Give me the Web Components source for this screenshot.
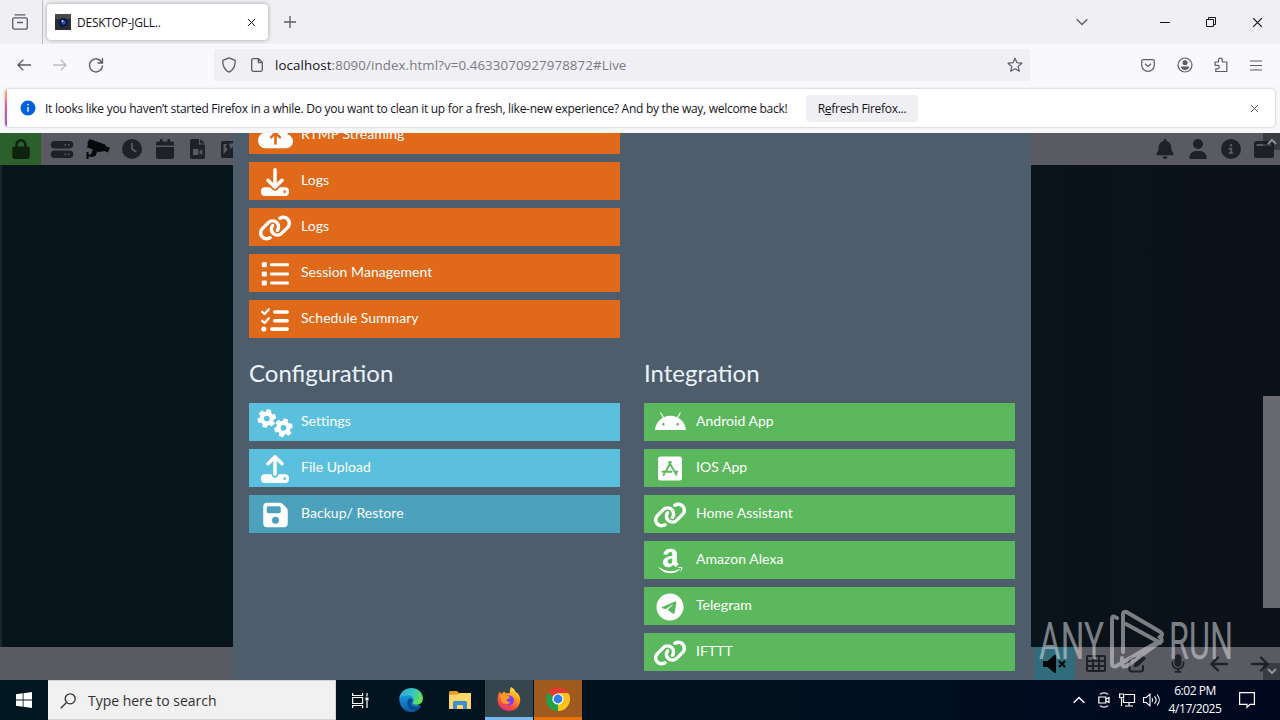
<!DOCTYPE html>
<html lang="en">
<head>
<meta charset="utf-8">
<title>DESKTOP-JGLL..</title>
<style>
  html, body { margin: 0; height: 100%; overflow: hidden; }
  body { font-family: "Open Sans", "Noto Sans", sans-serif; }
</style>
</head>
<body>
<desktop-screen></desktop-screen>

<script>
const gear = (cx, cy, r) => {
  const teeth = [0, 60, 120, 180, 240, 300].map((a) =>
    `<rect x="${cx - r * 0.27}" y="${cy - r}" width="${r * 0.54}" height="${r * 0.5}" rx="${r * 0.1}" transform="rotate(${a + 15} ${cx} ${cy})"/>`).join("");
  return `${teeth}<circle cx="${cx}" cy="${cy}" r="${r * 0.54}" fill="none" stroke="currentColor" stroke-width="${r * 0.46}"/>`;
};

// name: [viewBox, markup]
const ICONS = {
  link: ["0 0 640 512", `<path d="M579.8 267.7c56.5-56.5 56.5-148 0-204.5c-50-50-128.8-56.5-186.3-15.4l-1.6 1.1c-14.4 10.3-17.7 30.3-7.4 44.6s30.3 17.7 44.6 7.4l1.6-1.1c32.1-22.9 76-19.3 103.8 8.6c31.5 31.5 31.5 82.5 0 114L422.3 334.8c-31.5 31.5-82.5 31.5-114 0c-27.9-27.9-31.5-71.8-8.6-103.8l1.1-1.6c10.3-14.4 6.9-34.4-7.4-44.6s-34.4-6.9-44.6 7.4l-1.1 1.6C206.5 251.2 213 330 263 380c56.5 56.5 148 56.5 204.5 0L579.8 267.7zM60.2 244.3c-56.5 56.5-56.5 148 0 204.5c50 50 128.8 56.5 186.3 15.4l1.6-1.1c14.4-10.3 17.7-30.3 7.4-44.6s-30.3-17.7-44.6-7.4l-1.6 1.1c-32.1 22.9-76 19.3-103.8-8.6C74 372 74 321 105.5 289.5L217.7 177.2c31.5-31.5 82.5-31.5 114 0c27.9 27.9 31.5 71.8 8.6 103.9l-1.1 1.6c-10.3 14.4-6.9 34.4 7.4 44.6s34.4 6.9 44.6-7.4l1.1-1.6C433.5 260.8 427 182 377 132c-56.5-56.5-148-56.5-204.5 0L60.2 244.3z"/>`],
  cloud: ["0 0 640 512", `<path d="M144 480C64.5 480 0 415.5 0 336c0-62.8 40.2-116.2 96.2-135.9c-.1-2.7-.2-5.4-.2-8.1c0-88.4 71.6-160 160-160c59.3 0 111 32.2 138.7 80.2C409.9 102 428.3 96 448 96c53 0 96 43 96 96c0 12.2-2.3 23.8-6.4 34.6C596 238.4 640 290.1 640 352c0 70.7-57.3 128-128 128H144zm79-217c-9.4 9.4-9.4 24.6 0 33.9s24.6 9.4 33.9 0l39-39V392c0 13.3 10.7 24 24 24s24-10.7 24-24V257.9l39 39c9.4 9.4 24.6 9.4 33.9 0s9.4-24.6 0-33.9l-80-80c-9.4-9.4-24.6-9.4-33.9 0l-80 80z"/>`],
  download: ["0 0 512 512", `<path d="M288 32c0-17.7-14.3-32-32-32s-32 14.3-32 32V274.7l-73.4-73.4c-12.5-12.5-32.8-12.5-45.3 0s-12.5 32.8 0 45.3l128 128c12.5 12.5 32.8 12.5 45.3 0l128-128c12.5-12.5 12.5-32.8 0-45.3s-32.8-12.5-45.3 0L288 274.7V32zM64 352c-35.3 0-64 28.7-64 64v32c0 35.3 28.7 64 64 64H448c35.3 0 64-28.7 64-64V416c0-35.3-28.7-64-64-64H346.5l-45.3 45.3c-25 25-65.5 25-90.5 0L165.5 352H64zm368 56a24 24 0 1 1 0 48 24 24 0 1 1 0-48z"/>`],
  upload: ["0 0 512 512", `<path d="M288 109.3V352c0 17.7-14.3 32-32 32s-32-14.3-32-32V109.3l-73.4 73.4c-12.5 12.5-32.8 12.5-45.3 0s-12.5-32.8 0-45.3l128-128c12.5-12.5 32.8-12.5 45.3 0l128 128c12.5 12.5 12.5 32.8 0 45.3s-32.8 12.5-45.3 0L288 109.3zM64 352H192c0 35.3 28.7 64 64 64s64-28.7 64-64H448c35.3 0 64 28.7 64 64v32c0 35.3-28.7 64-64 64H64c-35.3 0-64-28.7-64-64V416c0-35.3 28.7-64 64-64zM432 456a24 24 0 1 0 0-48 24 24 0 1 0 0 48z"/>`],
  list: ["0 0 28 24", `<rect x=".8" y=".3" width="5" height="5" rx=".8"/><rect x=".8" y="9.500" width="5" height="5" rx=".8"/><rect x=".8" y="18.500" width="5" height="5" rx=".8"/><rect x="9" y="1.300" width="19" height="3" rx="1"/><rect x="9" y="10.500" width="19" height="3" rx="1"/><rect x="9" y="19.500" width="19" height="3" rx="1"/>`],
  checklist: ["0 0 28 24", `<path d="M1.2 3.8l2.4 2.2L7.8 1.2M1.2 12.8l2.4 2.2 4.2-4.8" fill="none" stroke="currentColor" stroke-width="2.3" stroke-linecap="round" stroke-linejoin="round"/><circle cx="2.8" cy="21" r="2.6"/><rect x="12" y="2.2" width="16" height="3.6" rx="1.8"/><rect x="12" y="11" width="16" height="3.4" rx="1.7"/><rect x="9" y="19.3" width="19" height="3.6" rx="1.8"/>`],
  gears: ["0 0 36 28", gear(9.8, 9.5, 9.2) + gear(26.5, 18.8, 9.2)],
  floppy: ["0 0 448 512", `<path d="M64 32C28.7 32 0 60.7 0 96V416c0 35.3 28.7 64 64 64H384c35.3 0 64-28.7 64-64V173.3c0-17-6.7-33.3-18.7-45.3L352 50.7C340 38.7 323.7 32 306.7 32H64zm0 96c0-17.7 14.3-32 32-32H288c17.7 0 32 14.3 32 32v64c0 17.7-14.3 32-32 32H96c-17.7 0-32-14.3-32-32V128zM224 288a64 64 0 1 1 0 128 64 64 0 1 1 0-128z"/>`],
  android: ["0 0 576 512", `<path d="M420.55,301.93a24,24,0,1,1,24-24,24,24,0,0,1-24,24m-265.1,0a24,24,0,1,1,24-24,24,24,0,0,1-24,24m273.7-144.48,47.94-83a10,10,0,1,0-17.27-10h0l-48.54,84.07a301.25,301.25,0,0,0-246.56,0L116.18,64.45a10,10,0,1,0-17.27,10h0l47.94,83C64.53,202.22,8.24,285.55,0,384H576c-8.24-98.45-64.54-181.78-146.85-226.55"/>`],
  appstore: ["0 0 24 24", `<rect width="24" height="24" rx="2.500"/><path d="M11 5.500l5.800 10 1.700 2.800M13 5.500L7.500 15.200M4.500 15.200h9M16.500 15.200h3M6.300 17.300l-.7 1.200" stroke="var(--cut)" stroke-width="1.900" stroke-linecap="round" fill="none"/>`],
  amazon: ["0 0 448 512", `<path d="M257.2 162.7c-48.7 1.8-169.5 15.5-169.5 117.5 0 109.5 138.3 114 183.5 43.2 6.5 10.2 35.4 37.5 45.3 46.8l56.8-56S341 288.9 341 261.4V114.3C341 89 316.5 32 228.7 32 140.7 32 94 87 94 136.3l73.5 6.8c16.3-49.5 54.2-49.5 54.2-49.5 40.7-.1 35.5 29.8 35.5 69.1zm0 86.8c0 80-84.2 68-84.2 17.2 0-47.2 50.5-56.7 84.2-57.8v40.6zm136 163.5c-7.7 10-70 67-174.5 67S34.2 408.5 9.7 379c-6.8-7.7 1-11.3 5.5-8.3C88.5 415.2 203 488.5 387.7 401c7.5-3.7 13.3 2 5.5 12zm39.8 2.2c-6.5 15.8-16 26.8-21.2 31-5.5 4.5-9.5 2.7-6.5-3.8s19.3-46.5 12.7-55c-6.500-8.300-37-4.300-48-3.200-10.800 1-13 2-14-.3-2.300-5.700 21.700-15.500 37.500-17.500 15.700-1.800 41-.8 46 5.700 3.700 5.100 0 27.100-6.500 43.100z"/>`],
  telegram: ["0 0 496 512", `<path d="M248,8C111.033,8,0,119.033,0,256S111.033,504,248,504,496,392.967,496,256,384.967,8,248,8ZM362.952,176.66c-3.732,39.215-19.881,134.378-28.1,178.3-3.476,18.584-10.322,24.816-16.948,25.425-14.4,1.326-25.338-9.517-39.287-18.661-21.827-14.308-34.158-23.215-55.346-37.177-24.485-16.135-8.612-25,5.342-39.5,3.652-3.793,67.107-61.51,68.335-66.746.153-.655.3-3.1-1.154-4.384s-3.59-.849-5.135-.5q-3.283.746-104.608,69.142-14.845,10.194-26.894,9.934c-8.855-.191-25.888-5.006-38.551-9.123-15.531-5.048-27.875-7.717-26.8-16.291q.84-6.7,18.45-13.7,108.446-47.248,144.628-62.3c68.872-28.647,83.183-33.623,92.511-33.789,2.052-.034,6.639.474,9.61,2.885a10.452,10.452,0,0,1,3.53,6.716A43.765,43.765,0,0,1,362.952,176.66Z"/>`],
  lock: ["0 0 448 512", `<path d="M144 144v48H304V144c0-44.2-35.8-80-80-80s-80 35.8-80 80zM80 192V144C80 64.5 144.5 0 224 0s144 64.5 144 144v48h16c35.3 0 64 28.7 64 64V448c0 35.3-28.7 64-64 64H64c-35.3 0-64-28.7-64-64V256c0-35.3 28.7-64 64-64H80z"/>`],
  server: ["0 0 20 17", `<path fill-rule="evenodd" d="M2.500 0h15a2.500 2.500 0 0 1 0 7.500h-15a2.500 2.500 0 0 1 0-7.500zM12.500 3v1.500h1.500V3zM16 3v1.500h1.500V3zM2.500 9.500h15a2.500 2.500 0 0 1 0 7.500h-15a2.500 2.500 0 0 1 0-7.500zM12.500 12.500v1.500h1.500v-1.500zM16 12.500v1.500h1.500v-1.500z"/>`],
  camera: ["0 0 24 20", `<path d="M3.500 0L19 5.500l1.500 2.500-2 4-5.500 1L.3 8l1.500-1L1.500 3.500zM20.500 7.500l3.500 1-2 5-3.500-1.500zM.5 13h2v2.500h2.500l2-5.500 4.500 2-2 4.800-3.500 1.200-3.500-.5V20h-2z"/>`],
  clock: ["0 0 512 512", `<path d="M256 0a256 256 0 1 1 0 512A256 256 0 1 1 256 0zM232 120V256c0 8 4 15.5 10.7 20l96 64c11 7.4 25.9 4.4 33.3-6.7s4.4-25.9-6.7-33.3L280 243.2V120c0-13.3-10.7-24-24-24s-24 10.7-24 24z"/>`],
  calendar: ["0 0 18 20", `<path d="M4 0h2.500v2.500h5V0H14v2.500h2A2 2 0 0 1 18 4.500V6.500H0v-2a2 2 0 0 1 2-2h2zM0 8h18v10a2 2 0 0 1-2 2H2a2 2 0 0 1-2-2z"/>`],
  video: ["0 0 15 20", `<path fill-rule="evenodd" d="M2 0h7v5.500h6V18a2 2 0 0 1-2 2H2a2 2 0 0 1-2-2V2a2 2 0 0 1 2-2zM10.200 0L15 4.500h-4.800zM3 10v6h5.500v-6zM9.500 12.300v1.800l2.800 2v-6z"/>`],
  image: ["0 0 17 17" , `<path fill-rule="evenodd" d="M2 0h13a2 2 0 0 1 2 2v13a2 2 0 0 1-2 2H2a2 2 0 0 1-2-2V2a2 2 0 0 1 2-2zM2.500 3v10l4.500-4.500-2.500-2.500L6 3zM8 2.500h7L9.500 8z"/>`],
  bell: ["0 0 448 512", `<path d="M224 0c-17.7 0-32 14.3-32 32V51.2C119 66 64 130.6 64 208v18.8c0 47-17.3 92.4-48.5 127.6l-7.4 8.3c-8.4 9.4-10.4 22.9-5.3 34.4S19.4 416 32 416H416c12.6 0 24-7.4 29.2-18.9s3.1-25-5.3-34.4l-7.4-8.3C401.3 319.2 384 273.9 384 226.8V208c0-77.4-55-142-128-156.8V32c0-17.7-14.3-32-32-32zm45.3 493.3c12-12 18.7-28.3 18.7-45.3H160c0 17 6.7 33.3 18.7 45.3s28.3 18.7 45.3 18.7s33.3-6.7 45.3-18.7z"/>`],
  user: ["0 0 448 512", `<path d="M224 256A128 128 0 1 0 224 0a128 128 0 1 0 0 256zm-45.7 48C79.8 304 0 383.8 0 482.3C0 498.7 13.3 512 29.7 512H418.3c16.4 0 29.700-13.3 29.700-29.700C448 383.800 368.200 304 269.700 304H178.300z"/>`],
  info: ["0 0 512 512", `<path d="M256 512A256 256 0 1 0 256 0a256 256 0 1 0 0 512zM216 336h24V272H216c-13.3 0-24-10.7-24-24s10.7-24 24-24h48c13.3 0 24 10.7 24 24v88h8c13.3 0 24 10.7 24 24s-10.7 24-24 24H216c-13.3 0-24-10.7-24-24s10.7-24 24-24zm40-208a32 32 0 1 1 0 64 32 32 0 1 1 0-64z"/>`],
  window: ["0 0 20 17", `<path fill-rule="evenodd" d="M2.500 0h15A2.500 2.500 0 0 1 20 2.500v12a2.500 2.500 0 0 1-2.500 2.500h-15A2.500 2.500 0 0 1 0 14.500v-12A2.500 2.500 0 0 1 2.500 0zM2.500 3v2h15V3z"/>`],
  mute: ["0 0 23 18", `<path d="M0 6h4.500L11.500 0h1.500v18h-1.500L4.500 12H0z"/><path d="M16 6l6 6M22 6l-6 6" stroke="currentColor" stroke-width="2"/>`],
  table: ["0 0 20 17", `<path fill-rule="evenodd" d="M2 0h16a2 2 0 0 1 2 2v13a2 2 0 0 1-2 2H2a2 2 0 0 1-2-2V2a2 2 0 0 1 2-2zM2 2v3h4V2zM8 2v3h4V2zM14 2v3h4V2zM2 7v3h4V7zM8 7v3h4V7zM14 7v3h4V7zM2 12v3h4v-3zM8 12v3h4v-3zM14 12v3h4v-3z"/>`],
  edit: ["0 0 18 18", `<path d="M7 3H4a2.500 2.500 0 0 0-2.500 2.500v8.500A2.500 2.500 0 0 0 4 16.500h8.500A2.500 2.500 0 0 0 15 14v-3" fill="none" stroke="currentColor" stroke-width="2.200" stroke-linecap="round"/><path d="M14.500 0L18 3.500 10 11.500l-4.500 1 1-4.500z"/>`],
  mic: ["0 0 384 512", `<path d="M192 0C139 0 96 43 96 96V256c0 53 43 96 96 96s96-43 96-96V96c0-53-43-96-96-96zM64 216c0-13.3-10.7-24-24-24s-24 10.7-24 24v40c0 89.1 66.2 162.7 152 174.4V464H120c-13.3 0-24 10.7-24 24s10.7 24 24 24H264c13.3 0 24-10.7 24-24s-10.7-24-24-24H216V430.4c85.8-11.7 152-85.3 152-174.4V216c0-13.3-10.7-24-24-24s-24 10.7-24 24v40c0 70.7-57.3 128-128 128s-128-57.3-128-128V216z"/>`],
  arrowLeft: ["0 0 18 16", `<path d="M17 8H2M8 1.500L1.500 8 8 14.500" fill="none" stroke="currentColor" stroke-width="2.300" stroke-linecap="round"/>`],
  arrowRight: ["0 0 18 16", `<path d="M1 8h15M10 1.500L16.500 8 10 14.500" fill="none" stroke="currentColor" stroke-width="2.300" stroke-linecap="round"/>`],

  // browser toolbar
  firefoxView: ["0 0 16 16", `<g fill="none" stroke="currentColor" stroke-width="1.300" stroke-linecap="round"><path d="M3 .8h10"/><path d="M2.500 3.800h11a1.800 1.800 0 0 1 1.800 1.800v7.600a2 2 0 0 1-2 2H2.700a2 2 0 0 1-2-2V5.600a1.800 1.800 0 0 1 1.800-1.800zM5.500 8.500h5"/></g>`],
  close: ["0 0 10 10", `<path d="M1 1l8 8M9 1L1 9" fill="none" stroke="currentColor" stroke-width="1.100"/>`],
  plus: ["0 0 12 12", `<path d="M6 0v12M0 6h12" fill="none" stroke="currentColor" stroke-width="1.300"/>`],
  chevron: ["0 0 12 8", `<path d="M.7 1.200L6 6.500l5.300-5.300" fill="none" stroke="currentColor" stroke-width="1.300"/>`],
  chevronUp: ["0 0 12 8", `<path d="M.7 6.800L6 1.500l5.300 5.300" fill="none" stroke="currentColor" stroke-width="1.500"/>`],
  scrollUp: ["0 0 10 7", `<path d="M1 6l4-4 4 4" fill="none" stroke="currentColor" stroke-width="2"/>`],
  scrollDown: ["0 0 10 7", `<path d="M1 1l4 4 4-4" fill="none" stroke="currentColor" stroke-width="2"/>`],
  minimize: ["0 0 10 10", `<path d="M0 5.500h10" stroke="currentColor"/>`],
  restore: ["0 0 10 10", `<path d="M.5 2.500h7v7h-7zM2.500 2.500v-2h7v7h-2" fill="none" stroke="currentColor"/>`],
  back: ["0 0 14 12", `<path d="M14 6H1M6.300.7L1 6l5.300 5.300" fill="none" stroke="currentColor" stroke-width="1.300"/>`],
  forward: ["0 0 14 12", `<path d="M0 6h13M7.700.7L13 6l-5.300 5.300" fill="none" stroke="currentColor" stroke-width="1.300"/>`],
  reload: ["0 0 16 16", `<path d="M13.800 5.500A6.500 6.500 0 1 0 14.500 8.500M14.500 1v5H9.500" fill="none" stroke="currentColor" stroke-width="1.300"/>`],
  shield: ["0 0 14 16", `<path d="M7 .8l6.200 2.500c.3 5.500-1.500 9.500-6.200 11.900C2.300 12.800.5 8.800.8 3.300z" fill="none" stroke="currentColor" stroke-width="1.300" stroke-linejoin="round"/>`],
  page: ["0 0 12 14" , `<path d="M2 .7h5.500l3.800 3.800v7.300a1.500 1.500 0 0 1-1.500 1.500H2.200A1.500 1.500 0 0 1 .7 11.800V2A1.300 1.300 0 0 1 2 .7zM7.300.9v3.800h3.800" fill="none" stroke="currentColor" stroke-width="1.300"/>`],
  star: ["0 0 16 16", `<path d="M8 1.200l2 4.500 4.900.5-3.700 3.200 1.100 4.900L8 11.800l-4.300 2.500 1.100-4.900L1.100 6.200 6 5.700z" fill="none" stroke="currentColor" stroke-width="1.200" stroke-linejoin="round"/>`],
  pocket: ["0 0 14 13", `<path d="M2 .7h10a1.300 1.300 0 0 1 1.300 1.300v4A6.300 6.300 0 0 1 .7 6V2A1.300 1.300 0 0 1 2 .7zM4 4.700l3 2.800 3-2.800" fill="none" stroke="currentColor" stroke-width="1.200"/>`],
  account: ["0 0 16 16", `<circle cx="8" cy="8" r="7" fill="none" stroke="currentColor" stroke-width="1.200"/><circle cx="8" cy="5.700" r="2.500"/><path d="M3.800 9.500h8.400c0 2.200-2 3.500-4.200 3.500s-4.200-1.300-4.200-3.500z"/>`],
  puzzle: ["0 0 14 16", `<path d="M1 8.400V5h3.500V3a1.900 1.900 0 0 1 3.800 0v2h4.500v9.500H1.800V11.800h1.800a1.700 1.700 0 0 0 0-3.400H1" fill="none" stroke="currentColor" stroke-width="1.200" stroke-linejoin="round"/>`],
  menu: ["0 0 12 11", `<path d="M0 1h12M0 5.500h12M0 10h12" stroke="currentColor" stroke-width="1.200"/>`],
  infoBlue: ["0 0 16 16", `<circle cx="8" cy="8" r="7.500" fill="#0060df"/><path d="M8 7v4.700M8 4v1.500" stroke="#fff" stroke-width="1.400"/>`],
  favicon: ["0 0 16 16", `<rect width="16" height="16" fill="#2b2c30"/><path d="M0 0h16v5H0z" fill="#47484b"/><circle cx="8.500" cy="8.500" r="4.500" fill="#0c1546"/><circle cx="8.500" cy="8.500" r="2.200" fill="#2250b8"/><circle cx="7.500" cy="7" r="1" fill="#cfdcf2"/>`],

  // taskbar
  windows: ["0 0 16 16", `<path d="M0 2.300L6.700 1.300v6.300H0zM7.500 1.200L16 0v7.600H7.500zM0 8.400h6.700v6.300L0 13.700zM7.500 8.400H16V16l-8.500-1.200z"/>`],
  search: ["0 0 16 16", `<path d="M.7 15.300l5.600-5.600" stroke="currentColor" stroke-width="1.300"/><circle cx="10.200" cy="5.800" r="5" fill="none" stroke="currentColor" stroke-width="1.300"/>`],
  taskview: ["0 0 17 15", `<path d="M.6 0v2.500h10V0M.6 15v-2.500h10V15M.6 4.500h10v6H.6zM15 0v3.500M15 8v7" fill="none" stroke="currentColor" stroke-width="1.200"/><rect x="13.500" y="4.500" width="3" height="3"/>`],
  edge: ["0 0 24 24", `<defs><linearGradient id="e1" x1="0" y1="0" x2="1" y2=".4"><stop offset="0" stop-color="#2aa7e4"/><stop offset=".6" stop-color="#35c5c0"/><stop offset="1" stop-color="#66e05a"/></linearGradient><linearGradient id="e2" x1="0" y1="0" x2="0" y2="1"><stop offset="0" stop-color="#1a9be0"/><stop offset="1" stop-color="#0c59a4"/></linearGradient></defs><path d="M.3 10C0 18 5 24 12 24c4.500 0 8-2 10-6l-6-2V6H2z" fill="url(#e2)"/><path d="M.3 10C1.500 3.500 6.500 0 12.200 0 19 0 24 4.800 24 10.500c0 3.800-2.800 6.300-6.300 6.300-3 0-4.700-1.200-3.700-2.500 2.200-3-.3-7-5-7-3.900 0-7.200 1-8.700 2.700z" fill="url(#e1)"/><path d="M9.500 11.500c-3.500 5 1 11.500 7.500 11 2.500-.7 4-2.500 5-4.500-3.500 1.800-8 1.500-9.500-1-1-1.500-.5-2.500.8-3.500.3-3-2.500-4.500-3.800-2z" fill="#0a4a90"/>`],
  explorer: ["0 0 22 19", `<path d="M0 1.500A1.500 1.500 0 0 1 1.500 0H8l2 2h12v15H0z" fill="#e8a11d"/><path d="M0 4l9-.5L11 2h11v16H0z" fill="#fcd568"/><path d="M4 18V11.500a1.500 1.500 0 0 1 1.500-1.500h11a1.500 1.500 0 0 1 1.500 1.500V18h-4v-4H8v4z" fill="#3b8fd0"/>`],
  firefox: ["0 0 24 24", `<defs><linearGradient id="f1" x1=".8" y1="0" x2=".3" y2="1"><stop offset="0" stop-color="#fff04a"/><stop offset=".4" stop-color="#ff9a1f"/><stop offset=".75" stop-color="#ff4a3f"/><stop offset="1" stop-color="#e62a80"/></linearGradient></defs><path d="M14 0c2.500 1.200 4 3 4.500 5 3.500 1.500 5 5 4.700 9C22.500 20 18 24 12 24S.8 19.500.6 13.500C.5 10 1.200 7 3 4.500L4 7l3-2.500 2 1.700 4-.2c-.5-2 0-4 1-6z" fill="url(#f1)"/><circle cx="12" cy="13.500" r="5" fill="#7a3ff0"/><path d="M3.500 9c3-2 5-1 6.500 0 2.500 0 3 1 2.500 2l-3 1.500c0 2 2 3 4 2-1 3-5.500 3.500-8 1.200C4 14 3.300 12 3.500 9z" fill="#ff9a2a"/>`],
  chrome: ["0 0 24 24", `<path d="M12 12L1.600 6A12 12 0 0 1 22.400 6z" fill="#e33b2e"/><path d="M12 12L22.400 6A12 12 0 0 1 12 24z" fill="#fcc31e"/><path d="M12 12v12A12 12 0 0 1 1.600 6z" fill="#22a04a"/><path d="M12 6h10.400l-5.200 9z" fill="#fcc31e"/><path d="M6.800 15L1.600 6 12 6z" fill="#e33b2e"/><path d="M6.800 15L1.600 6 5 7.500 12 17.500 12 24z" fill="#22a04a"/><circle cx="12" cy="12" r="5.600" fill="#fff"/><circle cx="12" cy="12" r="4.400" fill="#2f7de8"/>`],
  meet: ["0 0 12 16", `<path d="M2 2.300C4 .3 8 .3 10 2.300M2 13.700c2 2 6 2 8 0M.8 5h7v6h-7zM7.800 7.300L11 5.500v5L7.800 8.700" fill="none" stroke="currentColor" stroke-width="1.200"/>`],
  network: ["0 0 16 14", `<path d="M5.500 1.500h10v8h-11v-4M10 9.500v3.500M6 13h8M.6 1h4v3.500h-4zM2.500 4.500V13" fill="none" stroke="currentColor" stroke-width="1.200"/>`],
  volume: ["0 0 17 14", `<path d="M.6 4.500h2.700L7 1.200v11.600L3.300 9.500H.6zM9 5c.8 1.200.8 2.800 0 4M11.500 3.300c2 2.200 2 5.200 0 7.400M14 1.500c3 3.300 3 7.700 0 11" fill="none" stroke="currentColor" stroke-width="1.100"/>`],
  notice: ["0 0 16 16", `<path d="M.6.6h14.800v11.800H11L8 15.300V12.400H.6z" fill="none" stroke="currentColor" stroke-width="1.200"/>`]
};

class UiIcon extends HTMLElement {
  constructor() {
    super();
    this.attachShadow({ mode: "open" });
  }

  connectedCallback() {
    const [box, markup] = ICONS[this.getAttribute("name")];
    const w = this.getAttribute("w") || 16;
    const h = this.getAttribute("h") || w;
    this.shadowRoot.innerHTML = `
      <style>
        :host { display: block; flex: none; width: ${w}px; height: ${h}px; }
        svg { display: block; overflow: visible; }
      </style>
      <svg width="${w}" height="${h}" viewBox="${box}" fill="currentColor">${markup}</svg>
    `;
  }
}

class BrowserTabs extends HTMLElement {
  constructor() {
    super();
    this.attachShadow({ mode: "open" }).innerHTML = `
      <style>
        :host { display: flex; align-items: center; height: 44px; background: #f0f0f4; color: #5b5b66; }
        .view { width: 43px; height: 44px; display: flex; align-items: center; justify-content: center; border-right: 1px solid #bdbdc4; box-sizing: border-box; padding-right: 2px; }
        .tab { display: flex; align-items: center; box-sizing: border-box; width: 221px; height: 36px; margin-left: 4px; padding: 0 12px 0 8px; border-radius: 4px; background: #fff; box-shadow: 0 0 4px rgba(0,0,0,.35); color: #15141a; font-size: 12px; }
        .tab span { flex: 1; margin-left: 6px; letter-spacing: -.25px; }
        .new { margin-left: 15.500px; }
        .wins { margin-left: auto; display: flex; align-items: center; color: #15141a; padding-right: 17px; gap: 36px; }
        .wins :first-child { margin-right: 36px; color: #5b5b66; }
      </style>
      <div class="view"><ui-icon name="firefoxView" w="16"></ui-icon></div>
      <div class="tab"><ui-icon name="favicon" w="16"></ui-icon><span>DESKTOP-JGLL..</span><ui-icon name="close" w="9"></ui-icon></div>
      <ui-icon class="new" name="plus" w="12"></ui-icon>
      <div class="wins">
        <ui-icon name="chevron" w="12" h="8"></ui-icon>
        <ui-icon name="minimize" w="10"></ui-icon>
        <ui-icon name="restore" w="10"></ui-icon>
        <ui-icon name="close" w="11"></ui-icon>
      </div>
    `;
  }
}

class BrowserNav extends HTMLElement {
  constructor() {
    super();
    this.attachShadow({ mode: "open" }).innerHTML = `
      <style>
        :host { display: flex; align-items: center; height: 42px; background: #f9f9fb; color: #5b5b66; box-sizing: border-box; }
        .moves { display: flex; align-items: center; gap: 22px; width: 214px; padding-left: 17px; box-sizing: border-box; }
        .moves :nth-child(2) { color: #bcbcc2; }
        .moves :nth-child(3) { margin-left: -1px; }
        .url { display: flex; align-items: center; box-sizing: border-box; width: 816px; height: 32px; padding: 0 7px 0 8px; border-radius: 3px; background: #f0f0f4; font-size: 13.300px; }
        .url p { flex: 1; margin: 0 0 0 12px; color: #7a7a83; letter-spacing: .1px; }
        .url b { font-weight: 400; color: #15141a; }
        .tools { display: flex; align-items: center; gap: 21.700px; margin-left: auto; padding-right: 18px; }
      </style>
      <div class="moves">
        <ui-icon name="back" w="14" h="12"></ui-icon>
        <ui-icon name="forward" w="14" h="12"></ui-icon>
        <ui-icon name="reload" w="16"></ui-icon>
      </div>
      <div class="url">
        <ui-icon name="shield" w="14" h="16"></ui-icon>
        <ui-icon name="page" w="12" h="14" style="margin-left:15px"></ui-icon>
        <p><b>localhost</b>:8090/index.html?v=0.4633070927978872#Live</p>
        <ui-icon name="star" w="16"></ui-icon>
      </div>
      <div class="tools">
        <ui-icon name="pocket" w="14" h="13"></ui-icon>
        <ui-icon name="account" w="16"></ui-icon>
        <ui-icon name="puzzle" w="14" h="16"></ui-icon>
        <ui-icon name="menu" w="12" h="11"></ui-icon>
      </div>
    `;
  }
}

class BrowserNotice extends HTMLElement {
  constructor() {
    super();
    this.attachShadow({ mode: "open" }).innerHTML = `
      <style>
        :host { display: block; height: 47px; box-sizing: border-box; padding: 3px 5px 0; background: #f7f7fa; }
        .card { display: flex; align-items: center; height: 38px; box-sizing: border-box; padding: 0 16px 0 15px; background: #fff; border-radius: 4px; box-shadow: 0 0 2px rgba(0,0,0,.35); position: relative; overflow: hidden; color: #15141a; font-size: 12px; }
        .card::before { content: ""; position: absolute; left: 0; top: 0; bottom: 0; width: 2px; background: linear-gradient(#ffb36b, #e0569a 45%, #9059d8); }
        p { margin: 0 19px 0 9px; width: 742px; white-space: nowrap; letter-spacing: -.280px; }
        button { width: 112px; height: 27px; border: 0; padding: 0; border-radius: 4px; background: #f0f0f4; color: #15141a; font: inherit; letter-spacing: -.3px; }
        .x { margin-left: auto; color: #5b5b66; }
      </style>
      <div class="card">
        <ui-icon name="infoBlue" w="16"></ui-icon>
        <p>It looks like you haven’t started Firefox in a while. Do you want to clean it up for a fresh, like-new experience? And by the way, welcome back!</p>
        <button>R<u>e</u>fresh Firefox...</button>
        <ui-icon class="x" name="close" w="9"></ui-icon>
      </div>
    `;
  }
}

// one coloured row of the main menu: icon on the left, label in the slot
class MenuButton extends HTMLElement {
  constructor() {
    super();
    this.attachShadow({ mode: "open" });
  }

  connectedCallback() {
    const w = this.getAttribute("w");
    const h = this.getAttribute("h");
    this.shadowRoot.innerHTML = `
      <style>
        :host { display: flex; align-items: center; height: 38px; background: var(--row); --cut: var(--row); color: #fff; font: 14px Lato, sans-serif; letter-spacing: .04px; }
        .icon { width: 52px; padding-top: 1px; display: flex; justify-content: center; }
        .label { padding-bottom: 3px; }
      </style>
      <div class="icon"><ui-icon name="${this.getAttribute("icon")}" w="${w}" h="${h}"></ui-icon></div>
      <div class="label"><slot></slot></div>
    `;
  }
}

class MenuGroup extends HTMLElement {
  constructor() {
    super();
    this.attachShadow({ mode: "open" });
  }

  connectedCallback() {
    const title = this.getAttribute("heading");
    this.shadowRoot.innerHTML = `
      <style>
        :host { display: flex; flex-direction: column; gap: 8px; }
        h2 { margin: 0; height: 57px; font: 400 24px/69px Lato, sans-serif; color: #ebf3fa; }
      </style>
      ${title ? `<h2>${title}</h2>` : ""}
      <slot></slot>
    `;
  }
}

class MainMenu extends HTMLElement {
  constructor() {
    super();
    this.attachShadow({ mode: "open" }).innerHTML = `
      <style>
        :host { display: block; box-sizing: border-box; background: #4e5d6c; padding: 0 16px; overflow: hidden; }
        .grid { display: grid; grid-template-columns: 371px 371px; column-gap: 24px; margin-top: -17px; }
        .orange { --row: #e0691a; }
        .blue { --row: #5bc0de; }
        .green { --row: #5cb85c; }
        .hover { --row: #4ca2bd; }
      </style>
      <div class="grid">
        <menu-group class="orange">
          <menu-button icon="cloud" w="35" h="28">RTMP Streaming</menu-button>
          <menu-button icon="download" w="28" h="28">Logs</menu-button>
          <menu-button icon="link" w="34" h="28">Logs</menu-button>
          <menu-button icon="list" w="28" h="24">Session Management</menu-button>
          <menu-button icon="checklist" w="28" h="24">Schedule Summary</menu-button>
        </menu-group>
        <div></div>
        <menu-group class="blue" heading="Configuration">
          <menu-button icon="gears" w="36" h="28">Settings</menu-button>
          <menu-button icon="upload" w="28" h="28">File Upload</menu-button>
          <menu-button class="hover" icon="floppy" w="25" h="28">Backup/ Restore</menu-button>
        </menu-group>
        <menu-group class="green" heading="Integration">
          <menu-button icon="android" w="31" h="28">Android App</menu-button>
          <menu-button icon="appstore" w="24" h="25">IOS App</menu-button>
          <menu-button icon="link" w="34" h="28">Home Assistant</menu-button>
          <menu-button icon="amazon" w="25" h="28">Amazon Alexa</menu-button>
          <menu-button icon="telegram" w="28" h="28">Telegram</menu-button>
          <menu-button icon="link" w="34" h="28">IFTTT</menu-button>
        </menu-group>
      </div>
    `;
  }
}

class CameraPage extends HTMLElement {
  constructor() {
    super();
    this.attachShadow({ mode: "open" }).innerHTML = `
      <style>
        :host { display: flex; flex-direction: column; position: relative; height: 547px; overflow: hidden; background: #0a131b; }
        .bar { display: flex; background: #5a5b62; color: #1d2226; }
        .top { height: 32px; }
        .bottom { height: 33px; justify-content: flex-end; }
        .bar div { display: flex; align-items: center; justify-content: center; flex: none; }
        .lock { width: 41px; background: #2b602c; color: #10230f; }
        .right { margin-left: auto; width: 33px; }
        .stage { flex: 1; border-left: 2px solid #1b272f; background: linear-gradient(90deg, #08141b 70%, #0b1119); }
        .bottom div { width: 41px; }
        .bottom .mute { background: #316c7c; color: #05090b; }
        main-menu { position: absolute; left: 233px; top: 0; width: 798px; height: 547px; }
        .scroll { position: absolute; right: 0; top: 0; bottom: 0; width: 17px; display: flex; flex-direction: column; color: #909196; }
        .scroll div { height: 17px; display: flex; align-items: center; justify-content: center; background: rgba(25,26,32,.5); }
        .scroll .track { flex: 1; display: block; background: none; }
        .scroll .thumb { height: 212px; margin-top: 246px; background: #696a70; }
      </style>
      <div class="bar top">
        <div class="lock"><ui-icon name="lock" w="18" h="20"></ui-icon></div>
        <div style="width:42px"><ui-icon name="server" w="20" h="17"></ui-icon></div>
        <div style="width:30px;color:#060809"><ui-icon name="camera" w="24" h="20"></ui-icon></div>
        <div style="width:38px"><ui-icon name="clock" w="20"></ui-icon></div>
        <div style="width:27px"><ui-icon name="calendar" w="18" h="20"></ui-icon></div>
        <div style="width:39px"><ui-icon name="video" w="15" h="20"></ui-icon></div>
        <div style="width:25px"><ui-icon name="image" w="17"></ui-icon></div>
        <div class="right"><ui-icon name="bell" w="18" h="20"></ui-icon></div>
        <div style="width:33px"><ui-icon name="user" w="18" h="20"></ui-icon></div>
        <div style="width:33px"><ui-icon name="info" w="20"></ui-icon></div>
        <div style="width:33px"><ui-icon name="window" w="20" h="17"></ui-icon></div>
      </div>
      <div class="stage"></div>
      <div class="bar bottom">
        <div class="mute"><ui-icon name="mute" w="23" h="18"></ui-icon></div>
        <div><ui-icon name="table" w="20" h="17"></ui-icon></div>
        <div><ui-icon name="edit" w="18"></ui-icon></div>
        <div><ui-icon name="mic" w="14" h="19"></ui-icon></div>
        <div><ui-icon name="arrowLeft" w="18" h="16"></ui-icon></div>
        <div><ui-icon name="arrowRight" w="18" h="16"></ui-icon></div>
      </div>
      <main-menu></main-menu>
      <div class="scroll">
        <div><ui-icon name="scrollUp" w="10" h="7"></ui-icon></div>
        <div class="track"><div class="thumb"></div></div>
        <div><ui-icon name="scrollDown" w="10" h="7"></ui-icon></div>
      </div>
    `;
  }
}

class TaskBar extends HTMLElement {
  constructor() {
    super();
    this.attachShadow({ mode: "open" }).innerHTML = `
      <style>
        :host { display: flex; height: 40px; background: linear-gradient(90deg, #00171f, #01111e 60%, #000820); color: #fff; }
        .cell { width: 48px; display: flex; align-items: center; justify-content: center; box-sizing: border-box; }
        .search { display: flex; align-items: center; width: 288px; box-sizing: border-box; padding: 1px 0 0 12px; gap: 12px; background: #f1f1f1; border: 1px solid #d5d5d5; border-width: 1px 1px 1px 0; color: #303030; font-size: 14px; }
        .search span { padding-bottom: 1px; letter-spacing: -.020px; }
        .apps { display: flex; }
        .apps .cell { width: 50px; }
        .apps .first { width: 49px; }
        .apps .edge { padding-left: 2px; }
        .apps .fox { width: 48px; background: #35464f; border-bottom: 3px solid #76b9ed; margin-right: 1px; }
        .apps .chrome { width: 48px; background: #a05a1e; border-bottom: 3px solid #e8710a; }
        .tray { margin-left: auto; display: flex; align-items: center; padding-right: 25px; }
        .time { width: 54px; font-size: 12px; line-height: 18px; letter-spacing: -.450px; margin: 0 17px 0 8px; white-space: nowrap; display: flex; flex-direction: column; align-items: center; }
      </style>
      <div class="cell"><ui-icon name="windows" w="16"></ui-icon></div>
      <div class="search"><ui-icon name="search" w="16"></ui-icon><span>Type here to search</span></div>
      <div class="apps">
        <div class="cell first"><ui-icon name="taskview" w="17" h="15"></ui-icon></div>
        <div class="cell edge"><ui-icon name="edge" w="24"></ui-icon></div>
        <div class="cell"><ui-icon name="explorer" w="22" h="19"></ui-icon></div>
        <div class="cell fox"><ui-icon name="firefox" w="24"></ui-icon></div>
        <div class="cell chrome"><ui-icon name="chrome" w="24"></ui-icon></div>
      </div>
      <div class="tray">
        <ui-icon name="chevronUp" w="12" h="8"></ui-icon>
        <ui-icon name="meet" w="12" h="16" style="margin-left:13px"></ui-icon>
        <ui-icon name="network" w="16" h="14" style="margin-left:9px"></ui-icon>
        <ui-icon name="volume" w="17" h="14" style="margin-left:8px"></ui-icon>
        <div class="time"><span>6:02 PM</span><span>4/17/2025</span></div>
        <ui-icon name="notice" w="16"></ui-icon>
      </div>
    `;
  }
}

class WaterMark extends HTMLElement {
  constructor() {
    super();
    this.attachShadow({ mode: "open" }).innerHTML = `
      <style>
        :host { display: block; opacity: .55; }
        svg { display: block; overflow: visible; }
        text { font: 400 52px Roboto, sans-serif; fill: #d8d8dc; }
      </style>
      <svg width="204" height="70" viewBox="0 0 204 70">
        <text x="3" y="53" textLength="65" lengthAdjust="spacingAndGlyphs">ANY</text>
        <text x="133" y="53" textLength="64" lengthAdjust="spacingAndGlyphs">RUN</text>
        <g fill="none" stroke="#d8d8dc" stroke-width="4" stroke-linejoin="round" stroke-linecap="round">
          <path d="M81 12l-3-1.500q-2-.500-2 3v44q0 3.500 3.500 3l43-25"/>
          <path d="M87 46V8q.5-3 3.500-2l34 20q3 3 0 5M90 18l31 17M124 37q4-3-.5-6M124 36L91 60q-5 2-5-3v-5"/>
        </g>
      </svg>
    `;
  }
}

class DesktopScreen extends HTMLElement {
  constructor() {
    super();
    this.attachShadow({ mode: "open" }).innerHTML = `
      <style>
        :host { display: flex; flex-direction: column; position: relative; width: 1280px; height: 720px; overflow: hidden; }
        water-mark { position: absolute; left: 1036px; top: 606px; }
      </style>
      <browser-tabs></browser-tabs>
      <browser-nav></browser-nav>
      <browser-notice></browser-notice>
      <camera-page></camera-page>
      <task-bar></task-bar>
      <water-mark></water-mark>
    `;
  }
}

customElements.define("ui-icon", UiIcon);
customElements.define("browser-tabs", BrowserTabs);
customElements.define("browser-nav", BrowserNav);
customElements.define("browser-notice", BrowserNotice);
customElements.define("menu-button", MenuButton);
customElements.define("menu-group", MenuGroup);
customElements.define("main-menu", MainMenu);
customElements.define("camera-page", CameraPage);
customElements.define("task-bar", TaskBar);
customElements.define("water-mark", WaterMark);
customElements.define("desktop-screen", DesktopScreen);
</script>
</body>
</html>
